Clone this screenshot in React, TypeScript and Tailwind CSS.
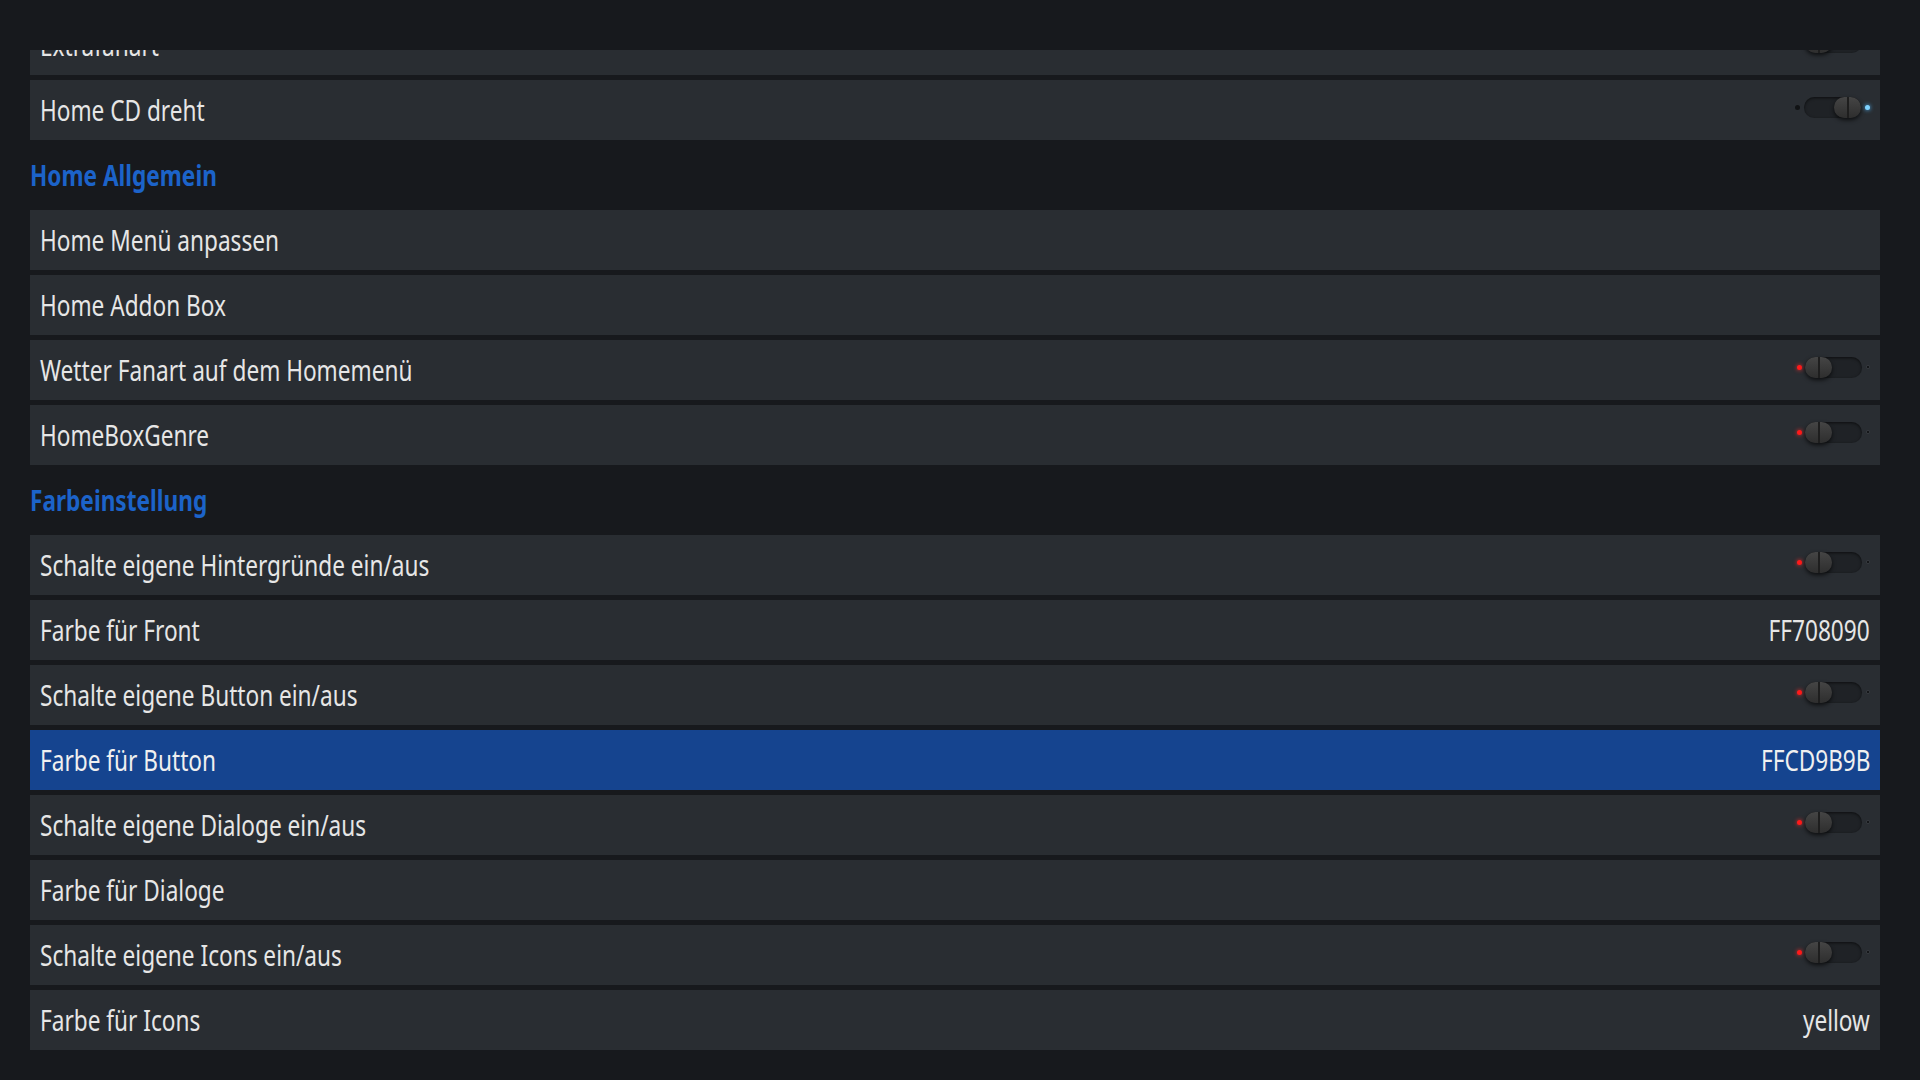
const font = "font-['Noto_Sans',Lato,sans-serif]";

type Item =
  | { kind: "header"; label: string }
  | { kind: "row"; label: string; value?: string; toggle?: "on" | "off"; selected?: boolean; first?: boolean };

const items: Item[] = [
  { kind: "row", label: "Extrafanart", toggle: "off", first: true },
  { kind: "row", label: "Home CD dreht", toggle: "on" },
  { kind: "header", label: "Home Allgemein" },
  { kind: "row", label: "Home Menü anpassen" },
  { kind: "row", label: "Home Addon Box" },
  { kind: "row", label: "Wetter Fanart auf dem Homemenü", toggle: "off" },
  { kind: "row", label: "HomeBoxGenre", toggle: "off" },
  { kind: "header", label: "Farbeinstellung" },
  { kind: "row", label: "Schalte eigene Hintergründe ein/aus", toggle: "off" },
  { kind: "row", label: "Farbe für Front", value: "FF708090" },
  { kind: "row", label: "Schalte eigene Button ein/aus", toggle: "off" },
  { kind: "row", label: "Farbe für Button", value: "FFCD9B9B", selected: true },
  { kind: "row", label: "Schalte eigene Dialoge ein/aus", toggle: "off" },
  { kind: "row", label: "Farbe für Dialoge" },
  { kind: "row", label: "Schalte eigene Icons ein/aus", toggle: "off" },
  { kind: "row", label: "Farbe für Icons", value: "yellow" },
];

const Knob = () => (
  <div className="w-[27px] h-[21px] rounded-full bg-gradient-to-b from-[#454545] to-[#2e2e2e] shadow-[0_2px_4px_rgba(0,0,0,0.7)] flex justify-center">
    <div className="w-[2px] h-full bg-[#1e1e1e]" />
  </div>
);

const Toggle = ({ on }: { on: boolean }) => (
  <div className="flex items-center -mt-[6px]">
    {on ? (
      <div className="w-[5px] h-[5px] rounded-full bg-[#111315] mr-[4px]" />
    ) : (
      <div className="w-[5px] h-[5px] rounded-full bg-[#ff1a1a] shadow-[0_0_4px_#ff2a2a] mr-[3px]" />
    )}
    <div
      className={
        "w-[57px] h-[21px] rounded-full bg-[#1f2226] shadow-[inset_0_1px_3px_rgba(0,0,0,0.6)] flex items-center " +
        (on ? "justify-end" : "justify-start")
      }
    >
      <Knob />
    </div>
    {on ? (
      <div className="w-[5px] h-[5px] rounded-full bg-[#7fd3ff] shadow-[0_0_4px_#4fb8ff] ml-[4px]" />
    ) : (
      <div className="w-[4px] h-[4px] rounded-[1px] bg-[#15171a] border border-[#33373c] ml-[4px]" />
    )}
  </div>
);

// the skin font is a condensed face; squeeze the text horizontally
const narrowL = "inline-block whitespace-nowrap origin-left scale-x-[0.78] -translate-y-[1px]";
const narrowR = "inline-block whitespace-nowrap origin-right scale-x-[0.78] -translate-y-[1px]";

export default function App() {
  return (
    <div className={"w-[1920px] h-[1080px] bg-[#17191d] overflow-hidden flex flex-col " + font}>
      <div className="h-[50px] shrink-0 bg-[#17191d] relative z-10" />
      <div className="flex-1 overflow-hidden pl-[30px] pr-[40px] bg-[#17191d]">
        <div className="flex flex-col gap-[5px]">
          {items.map((it, i) =>
            it.kind === "header" ? (
              <div key={i} className="h-[60px] flex items-center">
                <span className={"text-[29px] font-bold text-[#1c63c9] leading-none " + narrowL}>{it.label}</span>
              </div>
            ) : (
              <div
                key={i}
                className={
                  "h-[60px] flex items-center justify-between pl-[10px] pr-[10px] text-[29px] leading-none " +
                  (it.selected ? "bg-[#15448f] text-[#f0f0f0]" : "bg-[#292d32] text-[#e6e6e6]") +
                  (it.first ? " -mt-[35px]" : "")
                }
              >
                <span className={narrowL}>{it.label}</span>
                {it.value && <span className={narrowR}>{it.value}</span>}
                {it.toggle && <Toggle on={it.toggle === "on"} />}
              </div>
            )
          )}
        </div>
      </div>
    </div>
  );
}
